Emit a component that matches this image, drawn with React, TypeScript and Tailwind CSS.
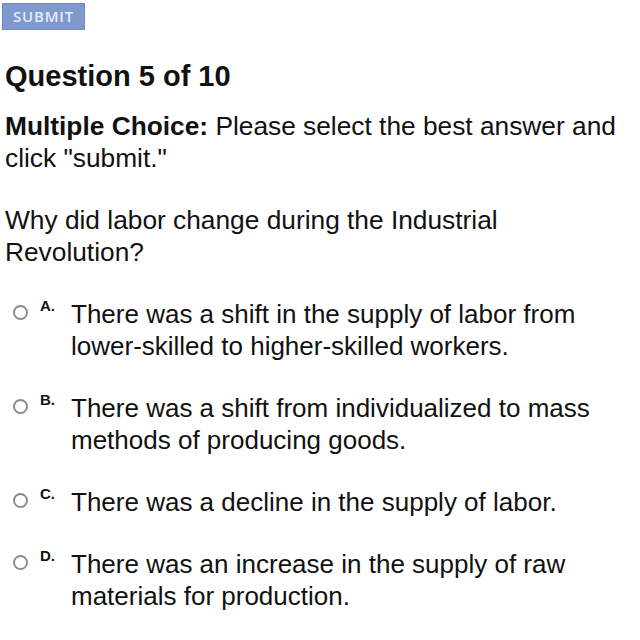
const options = [
  { letter: 'A.', text: 'There was a shift in the supply of labor from lower-skilled to higher-skilled workers.' },
  { letter: 'B.', text: 'There was a shift from individualized to mass methods of producing goods.' },
  { letter: 'C.', text: 'There was a decline in the supply of labor.' },
  { letter: 'D.', text: 'There was an increase in the supply of raw materials for production.' },
];

export default function App() {
  return (
    <div className="h-[640px] w-[640px] overflow-hidden bg-white font-['Liberation_Sans',Arial,sans-serif] text-[#111]">
      <div className="pl-[2px] pt-[3px]">
        <button className="flex h-[27px] w-[83px] items-center justify-center border border-[#6f88bd] bg-[#7f99cf] font-['Open_Sans',sans-serif] text-[15px] font-semibold tracking-[0.8px] text-[#e4ebf8]">
          SUBMIT
        </button>
      </div>

      <div className="px-[5px]">
        <h1 className="mt-[30px] text-[29px] font-bold leading-[32px]">Question 5 of 10</h1>

        <p className="mt-[18px] text-[26.3px] leading-[32px]">
          <span className="font-bold">Multiple Choice:</span> Please select the best answer and click "submit."
        </p>

        <p className="mt-[30px] text-[26.3px] leading-[32px]">
          Why did labor change during the Industrial Revolution?
        </p>

        <div className="mt-[30px] flex flex-col gap-[30px]">
          {options.map((o) => (
            <div key={o.letter} className="flex items-start">
              <span className="ml-[8px] mt-[7px] h-[15px] w-[15px] shrink-0 rounded-full border-2 border-[#8c8c8c]" />
              <span className="ml-[12px] mt-[-2px] w-[26px] shrink-0 text-[15px] font-bold leading-[20px]">{o.letter}</span>
              <span className="ml-[5px] pr-[20px] text-[26px] leading-[32px]">{o.text}</span>
            </div>
          ))}
        </div>
      </div>
    </div>
  );
}
